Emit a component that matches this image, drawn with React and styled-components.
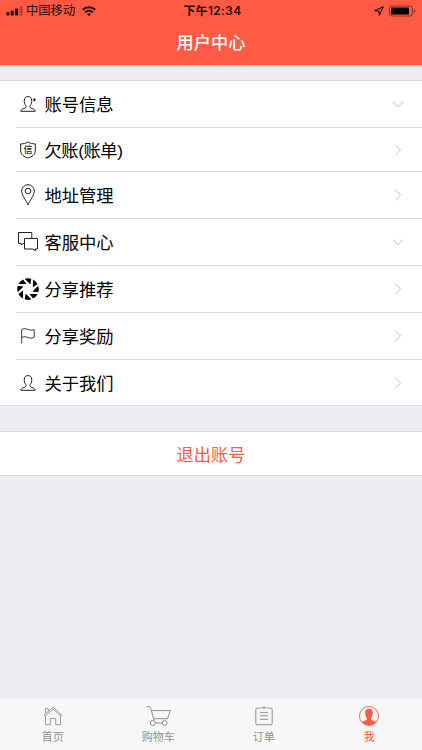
import React from "react";
import styled, { createGlobalStyle } from "styled-components";

const PRIMARY = "#ff5a43";

const GlobalStyle = createGlobalStyle`
  body {
    margin: 0;
    background: #eeedf3;
    font-family: "Liberation Sans", "Noto Sans CJK SC", sans-serif;
  }
`;

const Page = styled.div`
  display: flex;
  flex-direction: column;
  height: 750px;
  width: 100%;
  overflow: hidden;
  background: #eeedf3;

  svg {
    display: block;
    flex: none;
    overflow: visible;
  }
`;

const Header = styled.header`
  flex: none;
  height: 65px;
  background: ${PRIMARY};
  box-shadow: 0 1px 3px rgba(0, 0, 0, 0.2);
`;

const StatusBar = styled.div`
  display: grid;
  grid-template-columns: 1fr auto 1fr;
  align-items: center;
  height: 22px;
  padding: 0 6px;
  color: #1c0a07;
  font-size: 12px;
  line-height: 22px;
`;

const StatusGroup = styled.div`
  display: flex;
  align-items: center;
  justify-content: ${({ $end }) => ($end ? "flex-end" : "flex-start")};
  gap: ${({ $end }) => ($end ? "5px" : "0")};
`;

const Carrier = styled.span`
  margin: 0 7px 0 3px;
  font-size: 12.3px;
`;

const Clock = styled.span`
  padding-left: 3px;
  font-family: Inter, "Noto Sans CJK SC", sans-serif;
  font-size: 11.8px;
  font-weight: 600;
  letter-spacing: 0.45px;
`;

const Title = styled.h1`
  margin: 0;
  color: #fff;
  font-size: 17.2px;
  font-weight: 500;
  line-height: 42px;
  text-align: center;
`;

const Menu = styled.ul`
  flex: none;
  margin: 15px 0 0;
  padding: 0;
  list-style: none;
  background: #fff;
  border-top: 1px solid #d9d8dc;
  border-bottom: 1px solid #dedde1;
`;

const MenuRow = styled.li`
  display: flex;
  height: ${({ $height }) => $height}px;
  padding-left: 16px;
`;

const RowBody = styled.div`
  display: flex;
  flex: 1;
  align-items: center;
  box-sizing: border-box;
  padding-right: 18px;
  border-bottom: ${({ $last }) => ($last ? "none" : "1px solid #dcdcdc")};
`;

const RowIcon = styled.span`
  display: flex;
  justify-content: center;
  width: 24px;
  color: #222;
`;

const RowLabel = styled.span`
  flex: 1;
  margin-left: 4.5px;
  padding-top: 2px;
  color: #000;
  font-size: 17.3px;
  line-height: 26px;
  letter-spacing: ${({ $tight }) => ($tight ? "-0.45px" : "normal")};
`;

const LogoutButton = styled.button`
  flex: none;
  height: 45px;
  margin: 25px 0 0;
  padding: 0 0 1px;
  border: solid #dbdade;
  border-width: 1px 0;
  background: #fff;
  color: ${PRIMARY};
  font-family: inherit;
  font-size: 17.2px;
`;

const TabBar = styled.nav`
  display: grid;
  grid-template-columns: repeat(4, 1fr);
  flex: none;
  height: 52px;
  margin-top: auto;
  background: #f7f7f7;
`;

const Tab = styled.a`
  display: flex;
  flex-direction: column;
  align-items: center;
  padding-top: 8px;
  color: ${({ $active }) => ($active ? PRIMARY : "#929292")};
`;

const TabLabel = styled.span`
  margin-top: 3px;
  font-size: 11px;
  line-height: 16px;
`;

const Signal = () => (
  <svg width="17" height="10" viewBox="0 0 17 10" fill="currentColor">
    <rect x="0.3" y="6" width="3" height="3.5" rx="0.8" />
    <rect x="4.7" y="4.5" width="3" height="5" rx="0.8" />
    <rect x="9.1" y="2.5" width="3" height="7" rx="0.8" />
    <rect x="13.6" y="0" width="3" height="9.5" rx="0.8" opacity="0.3" />
  </svg>
);

const Wifi = () => (
  <svg width="14" height="10" viewBox="0 0 14 10" fill="none" stroke="currentColor">
    <path d="M0.7 3.8C4.2 0.4 9.8 0.4 13.3 3.8" strokeWidth="1.9" />
    <path d="M3.1 6.3C5.3 4.2 8.7 4.2 10.9 6.3" strokeWidth="1.8" />
    <path d="M4.9 7.9C6.2 6.9 7.8 6.9 9.1 7.9L7 10Z" fill="currentColor" stroke="none" />
  </svg>
);

const Location = () => (
  <svg width="10" height="10" viewBox="0 0 10 10" fill="none" stroke="currentColor" strokeWidth="1.1" strokeLinejoin="round">
    <path d="M9.3 0.8L0.8 4.8L4.9 5.2L5.3 9.1Z" />
  </svg>
);

const Battery = () => (
  <svg width="27" height="11" viewBox="0 0 27 11">
    <rect x="0.5" y="0" width="22.8" height="10" rx="2.3" fill="none" stroke="currentColor" opacity="0.5" />
    <rect x="2" y="1.5" width="18" height="7" rx="0.7" fill="#000" />
    <path d="M24.7 3.2C27 3.7 27 6.3 24.7 6.8Z" fill="currentColor" opacity="0.5" />
  </svg>
);

const Person = ({ plus }) => (
  <svg width="16" height="16" viewBox="0 0 16 16" fill="none" stroke="currentColor" strokeWidth="1">
    <path d="M6 9.7C4.5 8.2 4.1 6.2 4.3 4C4.5 1.7 5.8 0.6 8 0.6S11.5 1.7 11.7 4C11.9 6.2 11.5 8.2 10 9.7C9.7 11.3 10.1 11.8 12 12.5C14.2 13.3 15 13.4 15.2 15.3H0.8C1 13.4 1.8 13.3 4 12.5C5.9 11.8 6.3 11.3 6 9.7Z" />
    {plus && <path d="M12.8 3.8H16M14.4 2.2V5.4" strokeWidth="1.1" />}
  </svg>
);

const ShieldText = styled.text`
  font-family: "Noto Sans CJK SC", sans-serif;
  font-size: 9px;
  font-weight: 500;
`;

const Shield = () => (
  <svg width="16" height="18" viewBox="0 0 16 18" fill="none" stroke="currentColor">
    <path d="M8 1C5.8 2.4 3.4 2.9 0.7 2.9V10C0.7 13.4 4 15.8 8 17C12 15.8 15.3 13.4 15.3 10V2.9C12.6 2.9 10.2 2.4 8 1Z" />
    <ShieldText x="8" y="12" textAnchor="middle" fill="currentColor" stroke="none">
      信
    </ShieldText>
  </svg>
);

const Pin = () => (
  <svg width="14" height="22" viewBox="0 0 14 22" fill="none" stroke="currentColor">
    <path d="M7 21C5.6 16.8 0.7 11.6 0.7 7A6.3 6.3 0 0 1 13.3 7C13.3 11.6 8.4 16.8 7 21Z" />
    <circle cx="7" cy="7" r="2.8" />
  </svg>
);

const Chat = () => (
  <svg width="20" height="20" viewBox="0 0 20 20" fill="none" stroke="currentColor">
    <path d="M6.2 11.5H4.8L3.3 13V11.5H0.5V0.5H13.8V6" />
    <path d="M6.5 6.5H19.5V17H17.3V19L15 17H6.5Z" />
  </svg>
);

const BLADES = [0, 45, 90, 135, 180, 225, 270, 315];

const Aperture = () => (
  <svg width="22" height="22" viewBox="-11 -11 22 22" fill="#000">
    {BLADES.map((angle) => (
      <path
        key={angle}
        d="M-3.3 -10.3A10.8 10.8 0 0 1 3.2 -10.3L2.4 -4.5Z"
        transform={`rotate(${angle})`}
      />
    ))}
  </svg>
);

const Flag = () => (
  <svg width="14" height="16" viewBox="0 0 14 16" fill="none" stroke="currentColor" strokeWidth="0.9">
    <path d="M0.7 15.5V1.4C3 0.3 5 0.6 7 1.5C9 2.4 11 2.2 13.2 1.5V9.4C11 10.3 9 10.3 7 9.5C5 8.7 3 8.4 0.7 9.5" />
  </svg>
);

const Chevron = ({ down }) => (
  <svg width="12" height="12" viewBox="0 0 12 12" fill="none" stroke="#bebebe">
    <path d={down ? "M0.8 3.5L6 8.7L11.2 3.5" : "M3.4 0.8L8.6 6L3.4 11.2"} />
  </svg>
);

const Home = () => (
  <svg width="20" height="20" viewBox="0 0 20 20" fill="none" stroke="currentColor" strokeWidth="0.9">
    <path d="M1 9.2L10 1.2L19 9.2L18 10.2L10 3.2L2 10.2Z" />
    <path d="M2.5 7.7V2.5H5.2V5.4M2.5 10V18.7H7.3V12.5H12.7V18.7H17.5V10" />
  </svg>
);

const Cart = () => (
  <svg width="25" height="20" viewBox="0 0 25 20" fill="none" stroke="currentColor" strokeWidth="1">
    <path d="M0.5 0.7H3.5L4.7 2.3L8.2 14.5M5.4 4.6H24.3L21.5 12.7H7.7M9.5 17H16" />
    <circle cx="6.8" cy="17" r="2.5" />
    <circle cx="18.6" cy="17" r="2.5" />
  </svg>
);

const Orders = () => (
  <svg width="18" height="20" viewBox="0 0 18 20" fill="none" stroke="currentColor" strokeWidth="1">
    <path d="M4 2.2H1.8Q0.8 2.2 0.8 3.2V17.7Q0.8 18.7 1.8 18.7H16.2Q17.2 18.7 17.2 17.7V3.2Q17.2 2.2 16.2 2.2H14" />
    <path d="M4.8 6.7H13.2M4.8 9.8H13.2M4.8 13.3H13.2M5 1.5V3M13 1.5V3" />
    <path d="M6.8 1.7H11.2" strokeWidth="1.6" />
  </svg>
);

const Me = () => (
  <svg width="20" height="20" viewBox="0 0 20 20" fill="currentColor">
    <circle cx="10" cy="10" r="9.5" fill="none" stroke="currentColor" strokeWidth="0.9" />
    <path d="M10 2.7C7.3 2.7 6 4.3 6.2 6.7C6.3 9 6.7 10.7 7.8 12V13.7C6.5 14.8 4.2 14.8 3 16C6.5 20.4 13.5 20.4 17 16C15.8 14.8 13.5 14.8 12.2 13.7V12C13.3 10.7 13.7 9 13.8 6.7C14 4.3 12.7 2.7 10 2.7Z" />
  </svg>
);

const menuItems = [
  { label: "账号信息", icon: <Person plus />, height: 47, down: true },
  { label: "欠账(账单)", icon: <Shield />, height: 44, tight: true },
  { label: "地址管理", icon: <Pin />, height: 47 },
  { label: "客服中心", icon: <Chat />, height: 47, down: true },
  { label: "分享推荐", icon: <Aperture />, height: 47 },
  { label: "分享奖励", icon: <Flag />, height: 47 },
  { label: "关于我们", icon: <Person />, height: 45 },
];

const tabs = [
  { label: "首页", icon: <Home /> },
  { label: "购物车", icon: <Cart /> },
  { label: "订单", icon: <Orders /> },
  { label: "我", icon: <Me />, active: true },
];

export default function App() {
  return (
    <Page>
      <GlobalStyle />
      <Header>
        <StatusBar>
          <StatusGroup>
            <Signal />
            <Carrier>中国移动</Carrier>
            <Wifi />
          </StatusGroup>
          <Clock>下午12:34</Clock>
          <StatusGroup $end>
            <Location />
            <Battery />
          </StatusGroup>
        </StatusBar>
        <Title>用户中心</Title>
      </Header>
      <Menu>
        {menuItems.map((item, index) => (
          <MenuRow key={item.label} $height={item.height}>
            <RowBody $last={index === menuItems.length - 1}>
              <RowIcon>{item.icon}</RowIcon>
              <RowLabel $tight={item.tight}>{item.label}</RowLabel>
              <Chevron down={item.down} />
            </RowBody>
          </MenuRow>
        ))}
      </Menu>
      <LogoutButton>退出账号</LogoutButton>
      <TabBar>
        {tabs.map((tab) => (
          <Tab key={tab.label} $active={tab.active}>
            {tab.icon}
            <TabLabel>{tab.label}</TabLabel>
          </Tab>
        ))}
      </TabBar>
    </Page>
  );
}
